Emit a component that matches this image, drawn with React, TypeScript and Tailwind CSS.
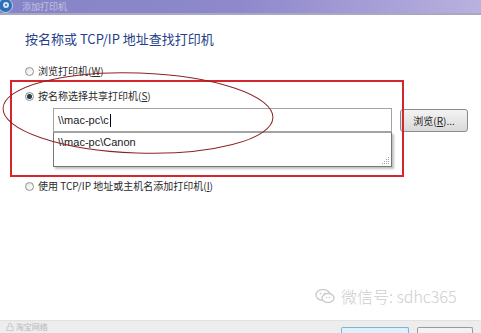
import React from 'react';

const cjk = { fontFamily: '"Noto Sans CJK SC", "Noto Sans", sans-serif' };
const latin = { fontFamily: '"Liberation Sans", "Noto Sans CJK SC", sans-serif' };

const Radio: React.FC<{ checked?: boolean }> = ({ checked }) => (
  <span className="w-[9px] h-[9px] rounded-full border border-[#8e8f8f] bg-gradient-to-br from-[#e6e6e6] to-[#ffffff] flex items-center justify-center shrink-0">
    {checked && <span className="w-[5px] h-[5px] rounded-full bg-[#2a3a4a]" />}
  </span>
);

const RadioRow: React.FC<{ checked?: boolean; label: string; hot: string; className?: string }> = ({ checked, label, hot, className }) => (
  <div className={`flex items-center gap-[4px] h-[14px] text-[10px] text-[#2a2a2a] ${className || ''}`} style={cjk}>
    <Radio checked={checked} />
    <span className="leading-none">
      {label}(<span className="underline">{hot}</span>)
    </span>
  </div>
);

export default function App() {
  return (
    <div className="w-[481px] h-[333px] bg-white relative overflow-hidden flex flex-col">
      {/* Title bar */}
      <div className="h-[13px] bg-gradient-to-r from-[#8584c6] via-[#8f88cc] to-[#b9b1de] flex items-center shrink-0 overflow-hidden">
        <div className="w-[15px] h-[15px] -mt-[3px] -ml-[2px] rounded-full bg-[#2e6fb8] border border-[#bcd4ee] flex items-center justify-center shrink-0">
          <div className="w-[6px] h-[6px] rounded-full border-2 border-white/80" />
        </div>
        <span className="ml-[9px] text-[9px] text-white/50 leading-[11px]" style={cjk}>添加打印机</span>
      </div>
      <div className="h-[2px] bg-[#a9a7c2] shrink-0" />

      {/* Content */}
      <div className="flex flex-col pl-[25px]">
        <h1 className="mt-[16px] text-[13px] leading-[16px] text-[#253f8a]" style={cjk}>
          按名称或 TCP/IP 地址查找打印机
        </h1>
        <RadioRow className="mt-[17px]" label="浏览打印机" hot="W" />
        <RadioRow className="mt-[11px]" checked label="按名称选择共享打印机" hot="S" />
        <div className="flex items-center mt-[5px] ml-[28px] relative">
          <div className="w-[339px] h-[24px] border border-[#a3a3a3] bg-white flex items-center pl-[4px] text-[11px] text-[#1a1a1a]" style={latin}>
            \\mac-pc\c<span className="w-px h-[13px] bg-black ml-px" />
          </div>
          <button className="ml-[8px] w-[68px] h-[23px] rounded-[3px] border border-[#8a8a8a] bg-gradient-to-b from-[#f4f4f4] to-[#d9d9d9] text-[10px] text-[#222]" style={cjk}>
            浏览(<span className="underline">R</span>)...
          </button>
          {/* autocomplete dropdown */}
          <div className="absolute left-0 top-[24px] w-[339px] h-[35px] border border-[#767676] border-t-[#a3a3a3] bg-white shadow-[2px_2px_2px_rgba(0,0,0,0.25)]">
            <div className="h-[18px] flex items-center pl-[4px] text-[11px] text-[#1a1a1a]" style={latin}>\\mac-pc\Canon</div>
            <svg className="absolute right-[1px] bottom-[1px]" width="9" height="9" viewBox="0 0 9 9">
              <g fill="#a0a0a0">
                <rect x="7" y="1" width="1" height="1" />
                <rect x="5" y="3" width="1" height="1" />
                <rect x="7" y="3" width="1" height="1" />
                <rect x="3" y="5" width="1" height="1" />
                <rect x="5" y="5" width="1" height="1" />
                <rect x="7" y="5" width="1" height="1" />
                <rect x="1" y="7" width="1" height="1" />
                <rect x="3" y="7" width="1" height="1" />
                <rect x="5" y="7" width="1" height="1" />
                <rect x="7" y="7" width="1" height="1" />
              </g>
            </svg>
          </div>
        </div>
        <div className="h-[47px]" />
        <RadioRow label="使用 TCP/IP 地址或主机名添加打印机" hot="I" />
      </div>

      {/* Bottom strip */}
      <div className="mt-auto h-[13px] bg-[#ededed] border-t border-[#e2e2e2] flex items-center justify-between px-[6px] shrink-0">
        <span className="text-[8px] text-[#b8b8b8] leading-none" style={cjk}>凸 淘宝网络</span>
        <div className="flex items-end gap-[8px] self-end">
          <div className="w-[68px] h-[6px] border border-b-0 border-[#7fb4d8] bg-[#dff0fa] rounded-t-[2px]" />
          <div className="w-[56px] h-[6px] border border-b-0 border-[#9a9a9a] bg-[#f2f2f2] rounded-t-[2px] mr-[2px]" />
        </div>
      </div>

      {/* Annotations */}
      <div className="absolute left-[10px] top-[80px] w-[394px] h-[97px] border-2 border-[#d4262c] pointer-events-none z-20" />
      <svg className="absolute left-0 top-0 pointer-events-none z-20" width="481" height="333">
        <ellipse cx="138" cy="113" rx="135" ry="40" fill="none" stroke="#8d2424" strokeWidth="1" transform="rotate(2 138 113)" />
      </svg>

      {/* Watermark */}
      <div className="absolute left-[315px] top-[288px] flex items-center gap-[6px] text-[#cdcdcd] z-20">
        <svg width="20" height="16" viewBox="0 0 20 16">
          <ellipse cx="8" cy="7" rx="7" ry="5.5" fill="none" stroke="#cdcdcd" strokeWidth="1.4" />
          <ellipse cx="13" cy="10" rx="6" ry="4.5" fill="#fff" stroke="#cdcdcd" strokeWidth="1.4" />
          <circle cx="5.5" cy="5.5" r="0.9" fill="#cdcdcd" />
          <circle cx="9.5" cy="5.5" r="0.9" fill="#cdcdcd" />
          <circle cx="11.5" cy="9.5" r="0.8" fill="#cdcdcd" />
          <circle cx="14.5" cy="9.5" r="0.8" fill="#cdcdcd" />
        </svg>
        <span className="text-[16px] leading-none font-light" style={cjk}>微信号: sdhc365</span>
      </div>
    </div>
  );
}
